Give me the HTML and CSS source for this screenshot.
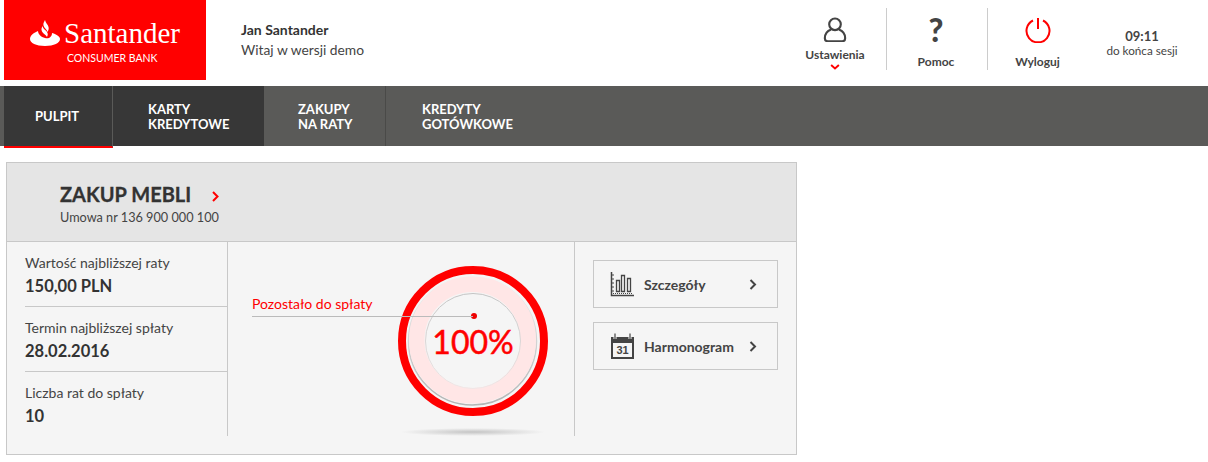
FILE: index.html
```html
<!DOCTYPE html>
<html lang="pl">
<head>
    <meta charset="UTF-8">
    <title>Santander Consumer Bank</title>
    <link rel="stylesheet" href="styles.css">
</head>
<body>
    <header class="top-bar">
        <div class="logo">
            <div class="logo-main">
                <svg class="logo-flame" width="30" height="26" viewBox="0 0 30 26">
                    <path fill="#fff" d="M15 0C14 2 13 3.500 13.500 5.500 14 8 17 9.500 17.500 12 18.500 10 19 9 18.500 7 18 4.500 15.500 3 15 0Z"/>
                    <path fill="#fff" d="M12.500 6C11.500 8 11 9.500 12 11.500 13 13.500 16 15 17 17 18 15 18 13.500 17 12 16 10 13 9 12.500 6Z"/>
                    <path fill="#fff" d="M8 11C8 14 11 17 15 18 19 19 22 17 22 13 27 14.500 30 16.500 30 19 30 23 24 26 15 26 6 26 0 23 0 19 0 15.500 4 12.500 8 11Z"/>
                </svg>
                <span class="logo-name">Santander</span>
            </div>
            <div class="logo-sub">CONSUMER BANK</div>
        </div>
        <div class="user-info">
            <div class="user-name">Jan Santander</div>
            <div class="user-hello">Witaj w wersji demo</div>
        </div>
        <div class="top-actions">
            <a class="action action-settings">
                <svg width="24" height="26" viewBox="0 0 24 26" fill="none" stroke="#444" stroke-width="2.200">
                    <circle cx="12" cy="7.500" r="6"/>
                    <path d="M8 13c-4 1.500-6.500 5-6.500 9 0 2 1 3 3 3h15c2 0 3-1 3-3 0-4-2.500-7.500-6.500-9"/>
                </svg>
                <span class="action-label">Ustawienia</span>
                <svg class="action-caret" width="10" height="6" viewBox="0 0 10 6" fill="none" stroke="#f00" stroke-width="2"><path d="M1 1l4 3.500L9 1"/></svg>
            </a>
            <a class="action action-help">
                <span class="help-mark">?</span>
                <span class="action-label">Pomoc</span>
            </a>
            <a class="action action-logout">
                <svg width="26" height="26" viewBox="0 0 26 26" fill="none" stroke="#f00" stroke-width="2">
                    <path d="M8 3.500a11.500 11.500 0 1 0 10 0"/>
                    <path d="M13 1v11"/>
                </svg>
                <span class="action-label">Wyloguj</span>
            </a>
            <div class="session">
                <div class="session-time">09:11</div>
                <div class="session-text">do końca sesji</div>
            </div>
        </div>
    </header>

    <nav class="main-nav">
        <a class="nav-item nav-pulpit">PULPIT</a>
        <a class="nav-item nav-karty">KARTY<br>KREDYTOWE</a>
        <a class="nav-item nav-zakupy">ZAKUPY<br>NA RATY</a>
        <a class="nav-item nav-kredyty">KREDYTY<br>GOTÓWKOWE</a>
    </nav>

    <section class="card">
        <div class="card-head">
            <h2 class="card-title">ZAKUP MEBLI
                <svg class="title-arrow" width="7" height="11" viewBox="0 0 7 11" fill="none" stroke="#f00" stroke-width="2"><path d="M1 1l4.500 4.500L1 10"/></svg>
            </h2>
            <div class="card-sub">Umowa nr 136 900 000 100</div>
        </div>
        <div class="card-body">
            <div class="facts">
                <div class="fact">
                    <div class="fact-label">Wartość najbliższej raty</div>
                    <div class="fact-value">150,00 PLN</div>
                </div>
                <div class="fact">
                    <div class="fact-label">Termin najbliższej spłaty</div>
                    <div class="fact-value">28.02.2016</div>
                </div>
                <div class="fact">
                    <div class="fact-label">Liczba rat do spłaty</div>
                    <div class="fact-value">10</div>
                </div>
            </div>
            <div class="gauge-col">
                <div class="gauge">
                    <svg class="gauge-ring" width="150" height="150" viewBox="0 0 150 150" fill="none">
                        <defs>
                            <linearGradient id="innerEdge" x1="0" y1="0" x2="0" y2="1">
                                <stop offset="0" stop-color="#c4c4c4"/>
                                <stop offset="1" stop-color="#f0e6e6"/>
                            </linearGradient>
                            <linearGradient id="outerEdge" x1="0" y1="0" x2="0" y2="1">
                                <stop offset="0" stop-color="#f2f2f2"/>
                                <stop offset="1" stop-color="#b4b4b4"/>
                            </linearGradient>
                        </defs>
                        <circle cx="75" cy="75" r="71" stroke="#f00" stroke-width="8"/>
                        <circle cx="74.500" cy="75" r="64" stroke="url(#outerEdge)" stroke-width="1.500"/>
                        <circle cx="74.500" cy="74" r="55.750" stroke="#ffe6e6" stroke-width="15.500"/>
                        <circle cx="75" cy="75" r="47.500" stroke="url(#innerEdge)" stroke-width="1"/>
                    </svg>
                    <span class="gauge-value">100%</span>
                    <span class="gauge-dot"></span>
                </div>
                <div class="gauge-shadow"></div>
                <div class="gauge-label">Pozostało do spłaty</div>
            </div>
            <div class="links">
                <a class="link-btn">
                    <svg class="link-icon" width="26" height="26" viewBox="0 0 26 26" fill="none" stroke="#444">
                        <path stroke-width="1.500" d="M1.500 1v23.500H24"/>
                        <path stroke-width="1" d="M4 4H2M4 8H2M4 12H2M4 16H2M4 20H2"/>
                        <path stroke-width="1.300" d="M6.500 9.500h3v11h-3zM11.500 4.500h3v16h-3zM17.500 7.500h3v13h-3z"/>
                        <path stroke-width="1" stroke-dasharray="1 1" d="M3 22.500h20"/>
                    </svg>
                    <span class="link-text">Szczegóły</span>
                    <svg class="link-arrow" width="8" height="11" viewBox="0 0 8 11" stroke="#444" stroke-width="2" fill="none"><path d="M1.500 1l4.500 4.500L1.500 10"/></svg>
                </a>
                <a class="link-btn">
                    <svg class="link-icon" width="26" height="26" viewBox="0 0 26 26">
                        <path fill="#444" d="M1 4h23v22H1z"/>
                        <rect x="3" y="10" width="19" height="14" fill="#f5f5f5"/>
                        <path fill="none" stroke="#f5f5f5" stroke-width="3" d="M5 1v5M20 1v5"/>
                        <path fill="none" stroke="#444" stroke-width="1.200" d="M5 .5v6M20 .5v6"/>
                        <text class="cal-day" x="12.500" y="21" text-anchor="middle">31</text>
                    </svg>
                    <span class="link-text">Harmonogram</span>
                    <svg class="link-arrow" width="8" height="11" viewBox="0 0 8 11" stroke="#444" stroke-width="2" fill="none"><path d="M1.500 1l4.500 4.500L1.500 10"/></svg>
                </a>
            </div>
        </div>
    </section>
</body>
</html>
```

FILE: styles.css
```css
* {
    margin: 0;
    padding: 0;
    box-sizing: border-box;
}

body {
    font-family: Lato, sans-serif;
    background: #fff;
    color: #333;
    font-size: 14px;
}

.top-bar {
    display: flex;
    height: 86px;
    padding-left: 4px;
}

.logo {
    width: 202px;
    height: 80px;
    background: #f00;
    color: #fff;
    padding: 18px 0 0 26px;
}

.logo-main {
    display: flex;
    align-items: center;
    gap: 4px;
}

.logo-flame {
    flex: none;
}

.logo-name {
    font-family: "Liberation Serif", serif;
    font-size: 29px;
    line-height: 30px;
}

.logo-sub {
    font-size: 10.500px;
    line-height: 14px;
    margin: 3px 0 0 37px;
}

.user-info {
    padding: 20px 0 0 35px;
    line-height: 20px;
}

.user-name {
    font-weight: 700;
    color: #333;
}

.user-hello {
    font-size: 13.800px;
    color: #444;
}

.top-actions {
    display: flex;
    margin-left: auto;
    padding-top: 8px;
}

.action {
    display: flex;
    flex-direction: column;
    align-items: center;
    height: 62px;
    padding: 9px 2px 0 0;
    position: relative;
}

.action-settings {
    width: 101px;
    border-right: 1px solid #ccc;
}

.action-help {
    width: 101px;
    border-right: 1px solid #ccc;
}

.action-logout {
    width: 101px;
}

.action-label {
    font-size: 12px;
    font-weight: 700;
    color: #444;
    line-height: 16px;
    margin-top: 5px;
}

.action-help .action-label,
.action-logout .action-label {
    margin-top: 11px;
}

.action-caret {
    margin-top: 1px;
}

.help-mark {
    font-size: 32px;
    font-weight: 900;
    line-height: 26px;
    color: #444;
}

.session {
    width: 119px;
    padding: 21px 13px 0 0;
    text-align: center;
    white-space: nowrap;
    display: flex;
    flex-direction: column;
    align-items: center;
}

.session-time {
    font-size: 13px;
    font-weight: 700;
    line-height: 15px;
    color: #444;
}

.session-text {
    font-size: 11.700px;
    line-height: 13px;
    color: #444;
}

.main-nav {
    display: flex;
    height: 60px;
    padding-left: 4px;
    background: #5a5a58;
}

.nav-item {
    font-size: 13px;
    font-weight: 700;
    line-height: 15px;
    color: #fff;
    height: 60px;
    display: flex;
    align-items: center;
    padding-top: 2px;
    border-right: 1px solid #4a4a48;
}

.nav-pulpit {
    width: 109px;
    background: #373737;
    padding-left: 31px;
    padding-top: 0;
    height: 62px;
    border-bottom: 2px solid #f00;
    border-right-color: #5a5a58;
}

.nav-karty {
    width: 151px;
    background: #373737;
    padding-left: 35px;
    border-right: 0;
}

.nav-zakupy {
    width: 122px;
    padding-left: 34px;
}

.nav-kredyty {
    padding-left: 36px;
    border-right: 0;
}

.card {
    width: 791px;
    height: 293px;
    margin: 16px 0 0 6px;
    border: 1px solid #c8c8c8;
    background: #f5f5f5;
}

.card-head {
    height: 79px;
    padding: 18px 0 0 53px;
    background: #e5e5e5;
    border-bottom: 1px solid #c8c8c8;
}

.card-title {
    font-size: 20px;
    font-weight: 700;
    line-height: 26px;
    color: #333;
    -webkit-text-stroke: .3px #333;
}

.title-arrow {
    margin-left: 16px;
}

.card-sub {
    font-size: 12.700px;
    line-height: 18px;
    color: #444;
    margin-top: 1px;
}

.card-body {
    display: flex;
}

.facts {
    width: 221px;
    height: 194px;
    padding-left: 18px;
    border-right: 1px solid #c8c8c8;
}

.fact {
    height: 65px;
    padding-top: 11px;
    border-bottom: 1px solid #c8c8c8;
}

.fact:last-child {
    border-bottom: 0;
}

.fact-label {
    font-size: 14px;
    line-height: 20px;
    color: #444;
}

.fact-value {
    font-size: 16.500px;
    font-weight: 700;
    line-height: 20px;
    margin-top: 3px;
    color: #333;
}

.gauge-col {
    width: 347px;
    height: 194px;
    padding: 24px 0 0 170px;
    border-right: 1px solid #c8c8c8;
    position: relative;
}

.gauge {
    width: 150px;
    height: 150px;
    position: relative;
}

.gauge-ring {
    display: block;
}

.gauge-value {
    position: absolute;
    inset: 0;
    display: flex;
    align-items: center;
    justify-content: center;
    font-size: 32px;
    color: #f00;
    -webkit-text-stroke: .5px #f00;
}

.gauge-dot {
    position: absolute;
    left: 73px;
    top: 47px;
    width: 6px;
    height: 6px;
    border-radius: 50%;
    background: #e00;
}

.gauge-shadow {
    width: 146px;
    height: 8px;
    margin: 12px 0 0 2px;
    background: radial-gradient(ellipse at center, #c4c4c4 0%, rgba(245,245,245,0) 70%);
}

.gauge-label {
    position: absolute;
    left: 24px;
    top: 52px;
    width: 221px;
    height: 23px;
    font-size: 14px;
    line-height: 20px;
    color: #f00;
    border-bottom: 1px solid #bbb;
}

.links {
    padding: 18px 0 0 18px;
    display: flex;
    flex-direction: column;
    gap: 14px;
}

.link-btn {
    display: flex;
    align-items: center;
    width: 185px;
    height: 48px;
    padding-left: 16px;
    border: 1px solid #c8c8c8;
}

.link-icon {
    flex: none;
}

.link-text {
    margin-left: 8px;
    font-size: 14px;
    font-weight: 700;
    color: #444;
}

.link-arrow {
    margin-left: auto;
    margin-right: 20px;
}

.cal-day {
    font-family: "Liberation Sans", sans-serif;
    font-size: 11px;
    font-weight: 700;
    fill: #444;
}
```
